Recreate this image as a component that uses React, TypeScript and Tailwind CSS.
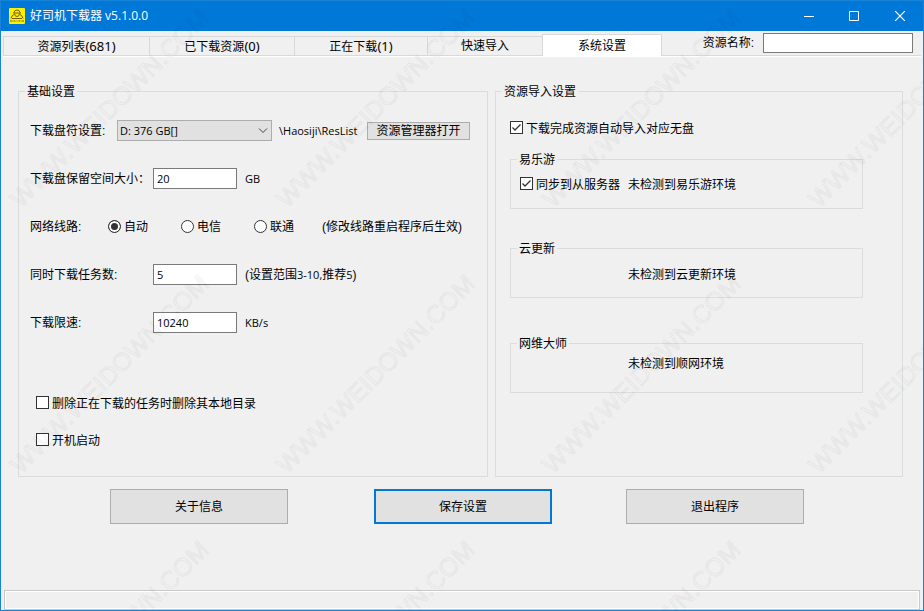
import { useState } from 'react';
import type { ReactNode } from 'react';
import clsx from 'clsx';

const tabs = [
  { name: '资源列表', count: 681, width: 'w-[146px]' },
  { name: '已下载资源', count: 0, width: 'w-[145px]' },
  { name: '正在下载', count: 1, width: 'w-[133px]' },
  { name: '快速导入', count: null, width: 'w-[115px]' },
  { name: '系统设置', count: null, width: 'w-[120px]' },
];

const lines = ['自动', '电信', '联通'];

const markColumns = [20, 286, 552, 818];
const markRows = [208, 474, 740];

const inputClass = 'h-[21px] border border-[#7a7a7a] bg-white px-[3px] font-["Open_Sans"] text-[11px] outline-none';
const buttonClass = 'border border-[#adadad] bg-[#e1e1e1] hover:bg-[#e5f1fb]';

function Latin({ children }: { children: ReactNode }) {
  return <span className='font-["Open_Sans"] text-[11px]'>{children}</span>;
}

function Group({ title, className, children }: { title: string; className?: string; children: ReactNode }) {
  return (
    <fieldset className={clsx('min-w-0 border border-[#dcdcdc]', className)}>
      <legend className="ml-[6px] px-[2px] pt-[2px] leading-4">{title}</legend>
      {children}
    </fieldset>
  );
}

function Check({ label, defaultChecked }: { label: string; defaultChecked?: boolean }) {
  return (
    <label className="flex h-4 w-fit items-start gap-[3px]">
      <span className="relative block size-[13px]">
        <input
          type="checkbox"
          defaultChecked={defaultChecked}
          className="peer block size-[13px] appearance-none border border-[#333333] bg-white"
        />
        <svg viewBox="0 0 13 13" className="pointer-events-none absolute inset-0 hidden size-[13px] peer-checked:block">
          <path d="M2.5 6.5 5 9l5.5-5.5" fill="none" stroke="#333" strokeWidth="1.3" />
        </svg>
      </span>
      {label}
    </label>
  );
}

function Watermark() {
  return (
    <svg className="pointer-events-none absolute inset-0 size-full" aria-hidden="true">
      {markRows.map((y) =>
        markColumns.map((x) => (
          <text
            key={`${x}-${y}`}
            transform={`translate(${x} ${y}) rotate(-45)`}
            fontSize="25"
            fill="#000"
            fillOpacity="0.01"
            stroke="#000"
            strokeWidth="2"
            strokeLinejoin="round"
            strokeOpacity="0.03"
            className='font-["Liberation_Sans"]'
          >
            WWW.WEIDOWN.COM
          </text>
        ))
      )}
    </svg>
  );
}

export default function App() {
  const [active, setActive] = useState('系统设置');

  return (
    <div className='relative flex min-h-screen flex-col overflow-hidden border border-[#1883d7] bg-[#f0f0f0] font-["Liberation_Sans","Noto_Sans_CJK_SC",sans-serif] text-[12px] leading-4 text-black'>
      {/* Title bar */}
      <header className="flex h-[30px] items-center bg-[#0078d7] pl-2 text-white">
        <svg viewBox="0 0 16 16" className="size-4" aria-hidden="true">
          <rect width="16" height="16" rx="1" fill="#ffee00" />
          <g fill="none" stroke="#6b6212">
            <path d="M5 4.5Q5.5 2 8 2t3 2.5" />
            <path d="M4 5h8" />
            <path d="M5.5 5.5Q5.5 8.500 8 8.500t2.500-3" />
            <path d="M5 6.500Q2.500 7.500 2 10.500M11 6.500q2.500 1 3 4" />
            <path d="M3 10.500h10" />
            <path d="M1 13h2.500M4.500 13h2M7.500 13h1M9.500 13h2M12.500 13H15" />
          </g>
        </svg>
        <h1 className='ml-[5px] grow font-["Open_Sans","Noto_Sans_CJK_SC",sans-serif]'>好司机下载器 v5.1.0.0</h1>
        <button type="button" aria-label="最小化" className="flex h-full w-[45px] items-center justify-center">
          <svg viewBox="0 0 10 10" className="size-[10px]">
            <path d="M0 5.5h10" stroke="#fff" />
          </svg>
        </button>
        <button type="button" aria-label="最大化" className="flex h-full w-[46px] items-center justify-center">
          <svg viewBox="0 0 10 10" className="size-[10px]">
            <path d="M.5.5h9v9h-9z" fill="none" stroke="#fff" />
          </svg>
        </button>
        <button type="button" aria-label="关闭" className="flex h-full w-[46px] items-center justify-center">
          <svg viewBox="0 0 10 10" className="size-[10px]">
            <path d="M0 0l10 10M10 0 0 10" stroke="#fff" strokeWidth="1.2" />
          </svg>
        </button>
      </header>

      {/* Tabs and search */}
      <div className="mx-[2px] flex h-[26px] items-end border-b border-white">
        <nav className="flex grow items-end self-stretch border-b border-[#d9d9d9]">
          {tabs.map((tab) => (
            <button
              key={tab.name}
              type="button"
              onClick={() => setActive(tab.name)}
              className={clsx(
                'border-t border-l border-[#d9d9d9]',
                tab.width,
                active === tab.name ? '-mb-px h-[22px] border-r bg-white' : 'h-[19px]'
              )}
            >
              {tab.name}
              {tab.count !== null && <span className='font-["Noto_Sans"] text-[13px]'>({tab.count})</span>}
            </button>
          ))}
          <label className="mr-[8px] mb-[2px] ml-auto flex items-center gap-[9px]">
            资源名称:
            <input type="text" className="h-[20px] w-[150px] border border-[#7a7a7a] bg-white px-[4px] outline-none" />
          </label>
        </nav>
      </div>

      {/* Settings */}
      <main className="grid grid-cols-[470fr_408fr] gap-[7px] pt-[25px] pr-[20px] pl-[17px]">
        <Group title="基础设置" className="h-[395px]">
          <div className="flex flex-col gap-[27px] pt-[20px] pl-[11px]">
            <div className="flex h-[21px] items-center">
              <label htmlFor="drive" className="w-[87px]">下载盘符设置:</label>
              <div className="relative">
                <select
                  id="drive"
                  className='block h-[21px] w-[155px] appearance-none border border-[#adadad] bg-[#e1e1e1] px-[2px] font-["Open_Sans"] text-[11px]'
                >
                  <option>D: 376 GB[]</option>
                </select>
                <svg viewBox="0 0 10 6" className="pointer-events-none absolute top-[8px] right-[4px] h-[6px] w-[10px]">
                  <path d="M1 .5l4 4 4-4" fill="none" stroke="#444" />
                </svg>
              </div>
              <span className="w-[95px] pl-[7px]">
                <Latin>\Haosiji\ResList</Latin>
              </span>
              <button type="button" className={clsx('h-[18px] w-[103px] leading-4', buttonClass)}>资源管理器打开</button>
            </div>
            <div className="flex h-[21px] items-center">
              <label htmlFor="reserve" className="w-[123px]">下载盘保留空间大小：</label>
              <input id="reserve" type="text" defaultValue="20" className={clsx('mr-[8px] w-[84px]', inputClass)} />
              <Latin>GB</Latin>
            </div>
            <div className="flex h-[21px] items-center">
              <span className="w-[78px]">网络线路:</span>
              <div className="flex gap-[5px]">
                {lines.map((line, i) => (
                  <label key={line} className="flex w-[68px] items-center gap-[3px]">
                    <input
                      type="radio"
                      name="line"
                      defaultChecked={i === 0}
                      className="size-[13px] appearance-none rounded-full border border-[#333333] bg-white checked:bg-[#333333] checked:shadow-[inset_0_0_0_2px_white]"
                    />
                    {line}
                  </label>
                ))}
              </div>
              <span>(修改线路重启程序后生效)</span>
            </div>
            <div className="flex h-[21px] items-center">
              <label htmlFor="tasks" className="w-[123px]">同时下载任务数:</label>
              <input id="tasks" type="text" defaultValue="5" className={clsx('mr-[8px] w-[84px]', inputClass)} />
              <span>
                (设置范围<Latin>3-10,</Latin>推荐<Latin>5</Latin>)
              </span>
            </div>
            <div className="flex h-[21px] items-center">
              <label htmlFor="limit" className="w-[123px]">下载限速:</label>
              <input id="limit" type="text" defaultValue="10240" className={clsx('mr-[8px] w-[84px]', inputClass)} />
              <Latin>KB/s</Latin>
            </div>
          </div>
          <div className="flex flex-col gap-[21px] pt-[63px] pl-[17px]">
            <Check label="删除正在下载的任务时删除其本地目录" />
            <Check label="开机启动" />
          </div>
        </Group>

        <Group title="资源导入设置" className="h-[395px]">
          <div className="pt-[21px] pr-[39px] pl-[14px]">
            <Check label="下载完成资源自动导入对应无盘" defaultChecked />
            <Group title="易乐游" className="mt-[13px] h-[59px]">
              <div className="flex gap-[8px] pt-[9px] pl-[9px]">
                <Check label="同步到从服务器" defaultChecked />
                <span>未检测到易乐游环境</span>
              </div>
            </Group>
            <Group title="云更新" className="mt-[30px] h-[59px]">
              <p className="pt-[10px] pl-[117px]">未检测到云更新环境</p>
            </Group>
            <Group title="网维大师" className="mt-[36px] h-[59px]">
              <p className="pt-[4px] pl-[117px]">未检测到顺网环境</p>
            </Group>
          </div>
        </Group>
      </main>

      <div className="flex pt-[12px] pl-[109px]">
        <button type="button" className={clsx('h-[35px] w-[178px]', buttonClass)}>关于信息</button>
        <button type="button" className="ml-[86px] h-[35px] w-[178px] border-2 border-[#0078d7] bg-[#e1e1e1]">
          保存设置
        </button>
        <button type="button" className={clsx('ml-[74px] h-[35px] w-[178px]', buttonClass)}>退出程序</button>
      </div>

      {/* Status bar */}
      <footer className="mx-[3px] mt-auto h-[20px] border border-[#c8c8c8]">
        <div className="h-full border border-white"></div>
      </footer>

      <Watermark />
    </div>
  );
}
